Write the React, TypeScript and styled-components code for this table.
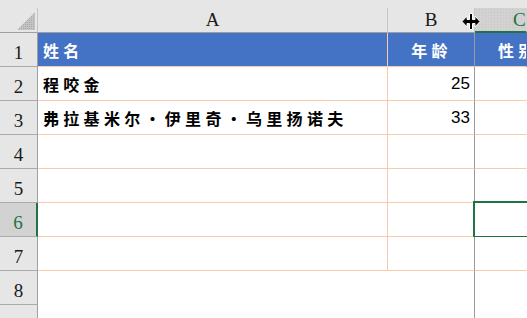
import React from 'react';
import styled, { createGlobalStyle, css } from 'styled-components';

const GlobalStyle = createGlobalStyle`
  html, body {
    margin: 0;
    padding: 0;
    background: #ffffff;
    overflow: hidden;
  }
`;

const PEACH = '#f8cbad';
const HEAD_LINE = '#9f9f9f';
const GREEN = '#217346';

type Row = { a?: string; b?: string; c?: string; head?: boolean };

const rows: Row[] = [
  { a: '姓名', b: '年龄', c: '性别', head: true },
  { a: '程咬金', b: '25' },
  { a: '弗拉基米尔·伊里奇·乌里扬诺夫', b: '33' },
  {},
  {},
  {},
  {},
];

const selectedRow = 6;

export default function App() {
  return (
    <>
      <GlobalStyle />
      <Window>
        <TopStrip />
        <Sheet>
          <Corner>
            <svg width="19" height="19" viewBox="0 0 19 19">
              <defs>
                <pattern id="dots" width="2" height="2" patternUnits="userSpaceOnUse">
                  <rect width="2" height="2" fill="#c4c4c4" />
                  <rect width="1" height="1" fill="#a9a9a9" />
                </pattern>
              </defs>
              <polygon points="18,0 18,18 0,18" fill="url(#dots)" />
            </svg>
          </Corner>
          <ColHeader>A</ColHeader>
          <ColHeader>B</ColHeader>
          <ColHeader $selected $last>C</ColHeader>

          {rows.map((row, i) => {
            const n = i + 1;
            return (
              <React.Fragment key={n}>
                <RowHeader $selected={n === selectedRow}>{n}</RowHeader>
                <Cell $fill={row.head} $line="peach">{row.a}</Cell>
                <Cell $fill={row.head} $line="grey" $align={row.head ? 'center' : 'right'} $num={!row.head}>
                  {row.b}
                </Cell>
                <Cell $fill={row.head} $line="none" $active={n === selectedRow} $indent={row.head}>
                  {row.c}
                </Cell>
              </React.Fragment>
            );
          })}

          {[8, 9].map((n) => (
            <React.Fragment key={n}>
              <RowHeader>{n}</RowHeader>
              <Blank />
              <Blank $divider />
              <Blank />
            </React.Fragment>
          ))}
        </Sheet>
        <ResizeCursor>
          <svg width="20" height="17" viewBox="0 0 20 17">
            <path
              d="M8.5 0.5h3v6h2.5V3l5 5.5-5 5.5v-3.5h-2.5v6h-3v-6H6V14l-5-5.5L6 3v3.5h2.5z"
              fill="#000"
              stroke="#fff"
              strokeWidth="1"
            />
          </svg>
        </ResizeCursor>
      </Window>
    </>
  );
}

const Window = styled.div`
  position: relative;
  width: 527px;
  height: 318px;
  overflow: hidden;
  background: #ffffff;
`;

const TopStrip = styled.div`
  height: 8px;
  background: #e6e6e6;
`;

const Sheet = styled.div`
  display: grid;
  grid-template-columns: 38px 350px 87px 1fr;
  grid-template-rows: 25px repeat(9, 34px);
`;

const headFont = css`
  font-family: 'Liberation Serif', 'Times New Roman', serif;
  font-size: 19px;
  line-height: 1;
  color: #1a1a1a;
`;

const Corner = styled.div`
  background: #e6e6e6;
  border-right: 1px solid #c6c6c6;
  border-bottom: 1px solid ${HEAD_LINE};
  display: flex;
  align-items: flex-end;
  justify-content: flex-end;
  padding: 0 1px 1px 0;
`;

const ColHeader = styled.div<{ $selected?: boolean; $last?: boolean }>`
  ${headFont};
  display: flex;
  align-items: flex-end;
  justify-content: center;
  padding-bottom: 3px;
  background: #e6e6e6;
  border-right: 1px solid ${(p) => (p.$last ? 'transparent' : '#c6c6c6')};
  border-bottom: 1px solid ${HEAD_LINE};
  white-space: nowrap;
  overflow: hidden;
  ${(p) =>
    p.$selected &&
    css`
      color: ${GREEN};
      background-color: #d2d2d2;
      background-image: radial-gradient(#c6c6c6 0.6px, transparent 0.7px);
      background-size: 3px 3px;
      border-bottom: 2px solid ${GREEN};
      padding-bottom: 2px;
      justify-content: flex-start;
      padding-left: 38px;
    `}
`;

const RowHeader = styled.div<{ $selected?: boolean }>`
  ${headFont};
  display: flex;
  align-items: flex-end;
  justify-content: center;
  padding-bottom: 4px;
  background: #e6e6e6;
  border-right: 1px solid ${HEAD_LINE};
  border-bottom: 1px solid #ababab;
  ${(p) =>
    p.$selected &&
    css`
      background: #d2d2d2;
      color: ${GREEN};
      border-right: 2px solid ${GREEN};
    `}
`;

const Cell = styled.div<{
  $fill?: boolean;
  $line: 'peach' | 'grey' | 'none';
  $align?: 'left' | 'center' | 'right';
  $num?: boolean;
  $active?: boolean;
  $indent?: boolean;
}>`
  position: relative;
  display: flex;
  align-items: flex-end;
  justify-content: ${(p) =>
    p.$align === 'right' ? 'flex-end' : p.$align === 'center' ? 'center' : 'flex-start'};
  padding: 0 4px 8px ${(p) => (p.$indent ? '23px' : '5px')};
  white-space: nowrap;
  overflow: hidden;
  background: ${(p) => (p.$fill ? '#4472c4' : '#ffffff')};
  color: ${(p) => (p.$fill ? '#ffffff' : '#000000')};
  font-family: 'Noto Sans CJK SC', 'Noto Sans', sans-serif;
  font-weight: 700;
  font-size: 16px;
  letter-spacing: 4.3px;
  line-height: 1;
  border-bottom: 1px solid ${PEACH};
  border-right: 1px solid
    ${(p) => (p.$line === 'peach' ? PEACH : p.$line === 'grey' ? '#9a9a9a' : 'transparent')};
  ${(p) =>
    p.$num &&
    css`
      font-family: 'Liberation Sans', Arial, sans-serif;
      font-weight: 400;
      font-size: 17px;
      letter-spacing: 0;
      padding-bottom: 8px;
    `}
  ${(p) =>
    p.$active &&
    css`
      overflow: visible;
      &::after {
        content: '';
        position: absolute;
        left: -2px;
        top: -2px;
        right: -4px;
        bottom: -2px;
        border: 2px solid ${GREEN};
      }
    `}
`;

const Blank = styled.div<{ $divider?: boolean }>`
  background: #ffffff;
  border-right: 1px solid ${(p) => (p.$divider ? '#9a9a9a' : 'transparent')};
`;

const ResizeCursor = styled.div`
  position: absolute;
  left: 461px;
  top: 13px;
  line-height: 0;
`;
